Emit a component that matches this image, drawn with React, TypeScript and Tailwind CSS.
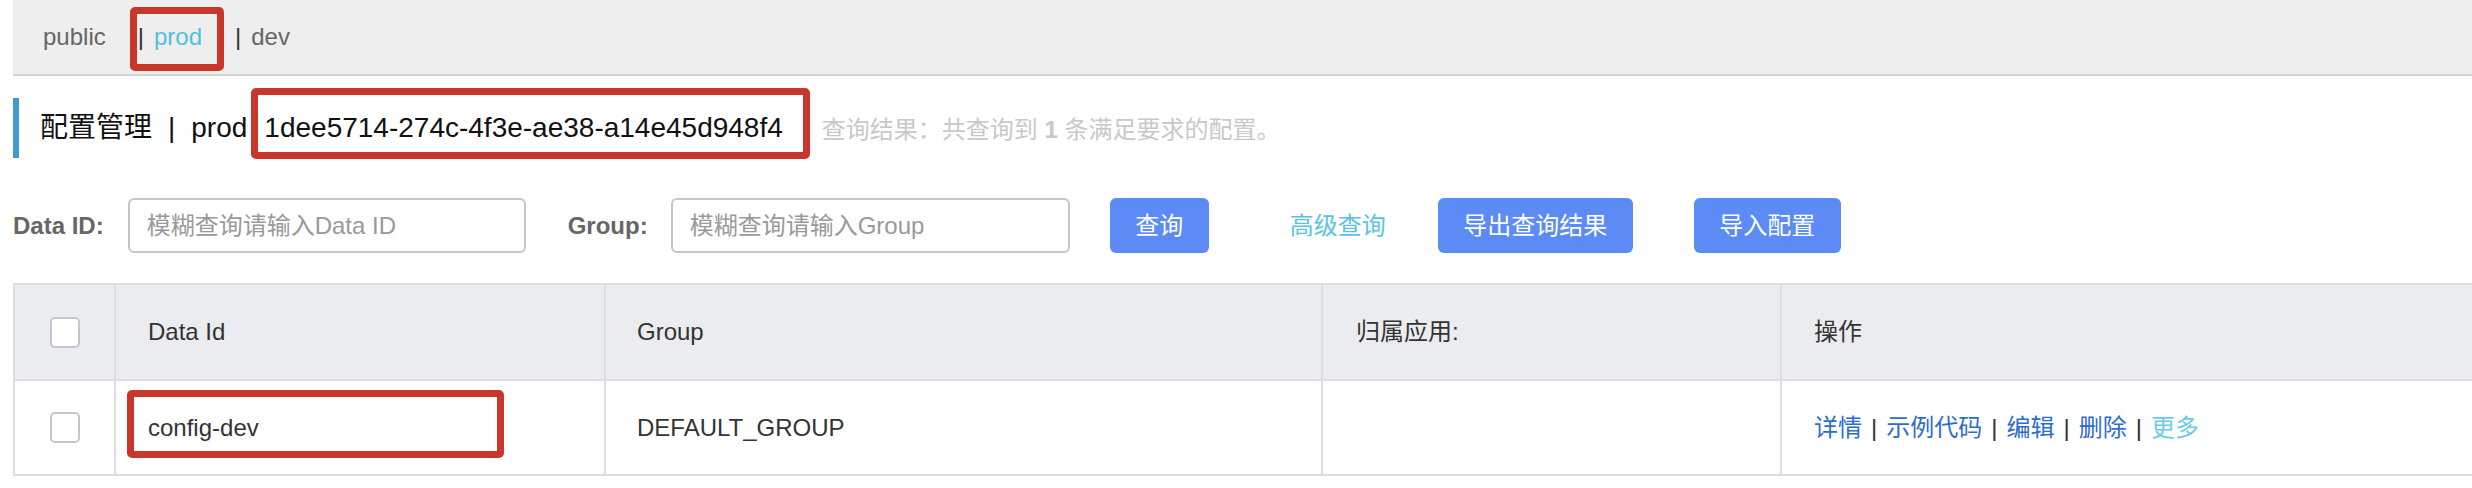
const FONT = "font-['Liberation_Sans','Noto_Sans_CJK_SC',sans-serif]";

function RedBox({ className }: { className: string }) {
  return (
    <span
      className={`pointer-events-none absolute rounded-[5px] border-[7px] border-[#c9372c] ${className}`}
    />
  );
}

function Checkbox() {
  return <span className="block h-[31px] w-[30px] rounded-[5px] border-2 border-[#c4c6cf] bg-white" />;
}

const ACTIONS = ["详情", "示例代码", "编辑", "删除"];

export default function App() {
  return (
    <div className={`${FONT} h-[488px] w-[2472px] overflow-hidden bg-white pl-[13px] text-[#333]`}>
      {/* namespace bar */}
      <div className="relative flex h-[76px] items-center border-b-2 border-[#d2d2d2] bg-[#eeeeee] pl-[30px] text-[24px] text-[#666]">
        <span>public</span>
        <span className="ml-[32px] text-[#333]">|</span>
        <span className="ml-[10px] text-[#52bfe1]">prod</span>
        <span className="ml-[33px] text-[#333]">|</span>
        <span className="ml-[10px]">dev</span>
        <RedBox className="left-[117px] top-[7px] h-[64px] w-[94px]" />
      </div>

      {/* heading */}
      <div className="mt-[22px] flex h-[60px] items-center">
        <span className="h-full w-[6px] bg-[#3d9bd1]" />
        <span className="ml-[21px] text-[28px] text-[#111]">配置管理</span>
        <span className="mx-[16px] text-[28px] text-[#111]">|</span>
        <span className="text-[28px] text-[#111]">prod</span>
        <span className="relative ml-[17px] inline-block h-[36px] text-[28px] leading-[36px] text-[#111]">
          1dee5714-274c-4f3e-ae38-a14e45d948f4
          <RedBox className="-bottom-[13px] -left-[13px] -right-[27px] -top-[22px]" />
        </span>
        <span className="ml-[39px] mt-[4px] text-[24px] text-[#c8c8c8]">
          查询结果：共查询到 <b>1</b> 条满足要求的配置。
        </span>
      </div>

      {/* search form */}
      <div className="mt-[40px] flex h-[55px] items-center text-[24px]">
        <span className="font-bold text-[#666]">Data ID:</span>
        <input
          className="ml-[24px] h-[55px] w-[398px] rounded-[6px] border-2 border-[#c4c6cf] pl-[17px] outline-none placeholder:text-[#999]"
          placeholder="模糊查询请输入Data ID"
        />
        <span className="ml-[42px] font-bold text-[#666]">Group:</span>
        <input
          className="ml-[23px] h-[55px] w-[399px] rounded-[6px] border-2 border-[#c4c6cf] pl-[17px] outline-none placeholder:text-[#999]"
          placeholder="模糊查询请输入Group"
        />
        <button className="ml-[40px] h-[55px] w-[99px] rounded-[6px] bg-[#5c8bf6] text-white">查询</button>
        <span className="ml-[81px] text-[#5bc3df]">高级查询</span>
        <button className="ml-[52px] h-[55px] w-[195px] rounded-[6px] bg-[#5c8bf6] text-white">导出查询结果</button>
        <button className="ml-[61px] h-[55px] w-[147px] rounded-[6px] bg-[#5c8bf6] text-white">导入配置</button>
      </div>

      {/* table */}
      <div className="mt-[30px] w-[2480px] border-2 border-[#dcdee3] text-[24px]">
        <div className="flex h-[96px] border-b-2 border-[#dcdee3] bg-[#ebecf0]">
          <div className="flex w-[101px] items-center justify-center border-r-2 border-[#dcdee3]">
            <Checkbox />
          </div>
          <div className="flex w-[490px] items-center border-r-2 border-[#dcdee3] pl-[32px]">Data Id</div>
          <div className="flex w-[717px] items-center border-r-2 border-[#dcdee3] pl-[31px]">Group</div>
          <div className="flex w-[459px] items-center border-r-2 border-[#dcdee3] pl-[33px]">归属应用:</div>
          <div className="flex flex-1 items-center pl-[32px]">操作</div>
        </div>
        <div className="flex h-[93px]">
          <div className="flex w-[101px] items-center justify-center border-r-2 border-[#dcdee3]">
            <Checkbox />
          </div>
          <div className="relative flex w-[490px] items-center border-r-2 border-[#dcdee3] pl-[32px]">
            config-dev
            <RedBox className="left-[11px] top-[9px] h-[68px] w-[377px]" />
          </div>
          <div className="flex w-[717px] items-center border-r-2 border-[#dcdee3] pl-[31px]">DEFAULT_GROUP</div>
          <div className="w-[459px] border-r-2 border-[#dcdee3]" />
          <div className="flex flex-1 items-center pl-[32px]">
            {ACTIONS.map((a) => (
              <span key={a} className="flex items-center">
                <span className="text-[#2c6dcc]">{a}</span>
                <span className="mx-[9px] text-[#333]">|</span>
              </span>
            ))}
            <span className="text-[#6ccbe6]">更多</span>
          </div>
        </div>
      </div>
    </div>
  );
}
